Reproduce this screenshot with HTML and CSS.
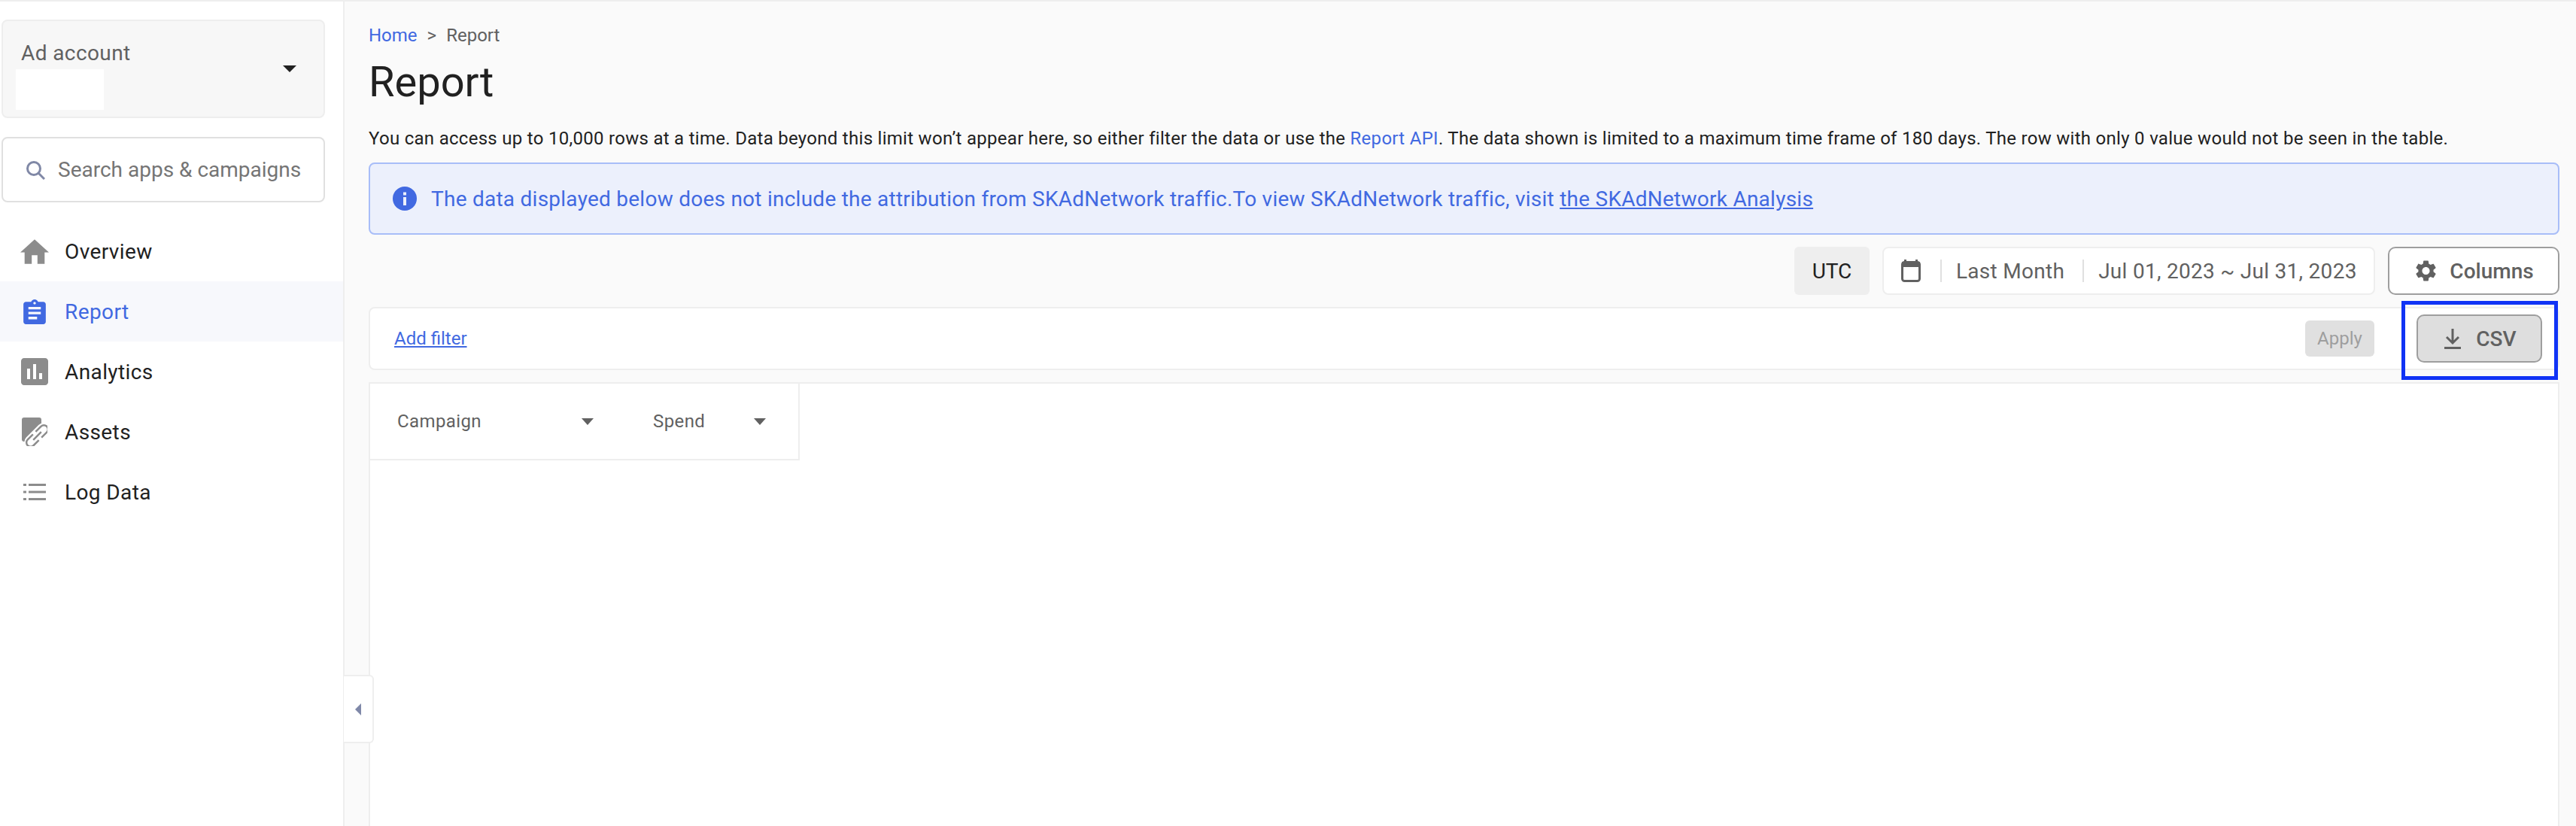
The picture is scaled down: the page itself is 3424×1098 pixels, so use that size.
FILE: index.html
```html
<!DOCTYPE html>
<html lang="en">
  <head>
    <meta charset="UTF-8" />
    <title>Report</title>
    <link rel="stylesheet" href="styles.css">
  </head>
  <body>
    <div class="app">
      <aside class="sidebar">
        <div class="account">
          <div class="account-info">
            <div class="account-label">Ad account</div>
            <div class="account-name"></div>
          </div>
          <span class="caret caret-dark"></span>
        </div>
        <div class="search">
          <svg width="26" height="26" viewBox="0 0 26 26" fill="none" stroke="#8088a6" stroke-width="3">
            <circle cx="11" cy="11" r="8.5" />
            <path d="M17 17l8 8" />
          </svg>
          <span>Search apps &amp; campaigns</span>
        </div>
        <nav class="nav">
          <a class="nav-item">
            <span class="nav-icon">
              <svg width="38" height="33" viewBox="2 3 20 17" fill="#8c8c8c"><path d="M10 20v-6h4v6h5v-8h3L12 3 2 12h3v8z" /></svg>
            </span>
            Overview
          </a>
          <a class="nav-item active">
            <span class="nav-icon">
              <svg width="30" height="33" viewBox="3 1 18 20" fill="#4169e1"><path d="M19 3h-4.18C14.4 1.84 13.3 1 12 1c-1.3 0-2.4.84-2.82 2H5c-1.1 0-2 .9-2 2v14c0 1.1.9 2 2 2h14c1.1 0 2-.9 2-2V5c0-1.1-.9-2-2-2zm-7 0c.55 0 1 .45 1 1s-.45 1-1 1-1-.45-1-1 .45-1 1-1zm2 14H7v-2h7v2zm3-4H7v-2h10v2zm0-4H7V7h10v2z" /></svg>
            </span>
            Report
          </a>
          <a class="nav-item">
            <span class="nav-icon">
              <svg width="36" height="36" viewBox="3 3 18 18" fill="#8c8c8c"><path d="M19 3H5c-1.1 0-2 .9-2 2v14c0 1.1.9 2 2 2h14c1.1 0 2-.9 2-2V5c0-1.1-.9-2-2-2zM9 17H7v-7h2v7zm4 0h-2V7h2v10zm4 0h-2v-4h2v4z" /></svg>
            </span>
            Analytics
          </a>
          <a class="nav-item">
            <span class="nav-icon">
              <svg width="34" height="38" viewBox="0 0 34 38" fill="none">
                <path d="M3 0h20a3 3 0 0 1 3 3v29H3a3 3 0 0 1-3-3V3a3 3 0 0 1 3-3z" fill="#8c8c8c" />
                <g transform="rotate(-45 20.500 24.500)">
                  <rect x="0" y="15.500" width="41" height="18" rx="9" fill="#fff" />
                  <path d="M18 19H8a5.500 5.500 0 0 0 0 11h10M23 19h10a5.500 5.500 0 0 1 0 11H23M13 24.500h15" stroke="#8c8c8c" stroke-width="2.500" />
                </g>
              </svg>
            </span>
            Assets
          </a>
          <a class="nav-item">
            <span class="nav-icon">
              <svg width="30" height="22" viewBox="0 0 30 22" fill="#8c8c8c">
                <rect x="0" y="0" width="4" height="3" />
                <rect x="7" y="0" width="23" height="3" />
                <rect x="0" y="9.5" width="4" height="3" />
                <rect x="7" y="9.5" width="23" height="3" />
                <rect x="0" y="19" width="4" height="3" />
                <rect x="7" y="19" width="23" height="3" />
              </svg>
            </span>
            Log Data
          </a>
        </nav>
      </aside>

      <main class="main">
        <div class="breadcrumb">
          <a class="link">Home</a>
          <span class="crumb-sep">&gt;</span>
          <span>Report</span>
        </div>
        <h1>Report</h1>
        <p class="notice">
          You can access up to 10,000 rows at a time. Data beyond this limit won’t appear here, so either filter the data or use the <a class="link">Report API</a>. The data shown is limited to a maximum time frame of 180 days. The row with only 0 value would not be seen in the table.
        </p>
        <div class="banner">
          <svg width="32" height="32" viewBox="0 0 32 32">
            <circle cx="16" cy="16" r="16" fill="#4169e1" />
            <rect x="14" y="14" width="4" height="11" fill="#ecf0fc" />
            <rect x="14" y="7.5" width="4" height="4" fill="#ecf0fc" />
          </svg>
          <span>The data displayed below does not include the attribution from SKAdNetwork traffic.To view SKAdNetwork traffic, visit <u>the SKAdNetwork Analysis</u></span>
        </div>

        <div class="toolbar">
          <div class="utc">UTC</div>
          <div class="date-range">
            <svg width="26" height="30" viewBox="0 0 26 30">
              <path d="M4 0h3v4H4zM19 0h3v4h-3z" fill="#616161" />
              <rect x="1.500" y="3.500" width="23" height="25" rx="3" fill="none" stroke="#616161" stroke-width="3" />
              <rect x="1" y="3" width="24" height="7" fill="#616161" />
            </svg>
            <span class="date-sep date-sep-first"></span>
            <span>Last Month</span>
            <span class="date-sep"></span>
            <span>Jul 01, 2023 ~ Jul 31, 2023</span>
          </div>
          <button class="btn btn-columns">
            <svg width="27" height="28" viewBox="2.500 2 19 20" fill="#616161"><path d="M19.140 12.940c.04-.3.06-.61.06-.94 0-.32-.02-.64-.07-.94l2.030-1.580c.18-.14.23-.41.12-.61l-1.920-3.320c-.12-.22-.37-.29-.59-.22l-2.390.96c-.5-.38-1.030-.7-1.620-.94l-.36-2.540c-.04-.24-.24-.41-.48-.41h-3.840c-.24 0-.43.17-.47.41l-.36 2.540c-.59.24-1.130.57-1.620.94l-2.390-.96c-.22-.08-.47 0-.59.22L2.740 8.870c-.12.21-.08.47.12.61l2.030 1.580c-.05.3-.09.63-.09.94s.02.64.07.94l-2.030 1.580c-.18.14-.23.41-.12.61l1.920 3.320c.12.22.37.29.59.22l2.390-.96c.5.38 1.030.7 1.620.94l.36 2.540c.05.24.24.41.48.41h3.840c.24 0 .44-.17.47-.41l.36-2.540c.59-.24 1.130-.56 1.620-.94l2.390.96c.22.08.47 0 .59-.22l1.920-3.320c.12-.22.07-.47-.12-.61l-2.010-1.580zM12 15.600c-1.980 0-3.600-1.620-3.600-3.600s1.620-3.600 3.600-3.600 3.600 1.620 3.600 3.600-1.620 3.600-3.600 3.600z" /></svg>
            Columns
          </button>
        </div>

        <div class="filter-bar">
          <a class="link add-filter">Add filter</a>
          <button class="btn-apply">Apply</button>
          <div class="csv-wrap">
            <button class="btn btn-csv">
              <svg width="22" height="27" viewBox="0 0 22 27" fill="none" stroke="#616161" stroke-width="3">
                <path d="M11 0v19M3 11l8 8 8-8" />
                <path d="M0 25.500h22" />
              </svg>
              CSV
            </button>
            <div class="highlight"></div>
          </div>
        </div>

        <div class="table">
          <div class="table-head">
            <div class="col col-campaign">Campaign <span class="caret"></span></div>
            <div class="col col-spend">Spend <span class="caret"></span></div>
          </div>
        </div>

        <div class="collapse-tab"><span class="tab-arrow"></span></div>
      </main>
    </div>
  </body>
</html>
```

FILE: styles.css
```css
* {
  box-sizing: border-box;
}

html,
body {
  margin: 0;
  height: 100%;
  overflow: hidden;
}

body {
  font-family: "Roboto", "Liberation Sans", sans-serif;
  color: #212121;
  background-color: #fff;
}

.app {
  display: flex;
  height: 100vh;
  border-top: 2px solid #eee;
}

.link {
  color: #4169e1;
}

/* sidebar */
.sidebar {
  width: 458px;
  flex-shrink: 0;
  padding-top: 24px;
  background-color: #fff;
  border-right: 2px solid #eee;
}

.account {
  display: flex;
  align-items: center;
  justify-content: space-between;
  width: 430px;
  height: 131px;
  margin-left: 2px;
  padding: 0 36px 0 17px;
  background-color: #f7f7f7;
  border: 2px solid #eee;
  border-radius: 8px;
}

.account-info {
  margin-top: 16px;
}

.account-label {
  padding-left: 7px;
  font-size: 28px;
  line-height: 36px;
  letter-spacing: 0.4px;
  color: #616161;
}

.account-name {
  width: 117px;
  height: 54px;
  margin-top: 3px;
  background-color: #fff;
}

.caret {
  display: inline-block;
  width: 0;
  height: 0;
  border-left: 8px solid transparent;
  border-right: 8px solid transparent;
  border-top: 9px solid #616161;
}

.caret-dark {
  border-left-width: 9px;
  border-right-width: 9px;
  border-top-color: #212121;
}

.search {
  display: flex;
  align-items: center;
  gap: 17px;
  width: 430px;
  height: 87px;
  margin: 25px 0 25px 2px;
  padding-left: 30px;
  font-size: 28px;
  color: #757575;
  background-color: #fff;
  border: 2px solid #e0e0e0;
  border-radius: 8px;
}

.nav-item {
  display: flex;
  align-items: center;
  gap: 20px;
  height: 80px;
  padding-left: 26px;
  font-size: 28px;
  letter-spacing: 0.4px;
  color: #212121;
}

.nav-item.active {
  color: #4169e1;
  background-color: #f7f8fc;
}

.nav-icon {
  display: flex;
  align-items: center;
  justify-content: center;
  width: 40px;
}

/* main */
.main {
  position: relative;
  flex: 1;
  min-width: 0;
  padding: 28px 22px 0 32px;
  background-color: #fafafa;
}

.breadcrumb {
  display: flex;
  gap: 13px;
  font-size: 24px;
  line-height: 34px;
  color: #616161;
}

h1 {
  margin: 7px 0 0;
  font-size: 56px;
  line-height: 76px;
  font-weight: 400;
}

.notice {
  margin: 20px 0 0;
  font-size: 24px;
  line-height: 34px;
  letter-spacing: 0.285px;
  white-space: nowrap;
}

.banner {
  display: flex;
  align-items: center;
  gap: 19px;
  height: 96px;
  margin-top: 15px;
  padding-left: 30px;
  font-size: 28px;
  letter-spacing: 0.25px;
  color: #4169e1;
  background-color: #ecf0fc;
  border: 2px solid #a8bdf8;
  border-radius: 8px;
}

.toolbar {
  display: flex;
  justify-content: flex-end;
  gap: 17px;
  margin-top: 16px;
}

.utc {
  display: flex;
  align-items: center;
  justify-content: center;
  width: 100px;
  height: 64px;
  font-size: 28px;
  background-color: #eee;
  border-radius: 6px;
}

.date-range {
  display: flex;
  align-items: center;
  width: 655px;
  height: 64px;
  padding-left: 23px;
  font-size: 28px;
  letter-spacing: 0.28px;
  color: #616161;
  background-color: #fff;
  border: 2px solid #eee;
  border-radius: 8px;
}

.date-sep {
  width: 2px;
  height: 30px;
  margin: 0 19px 0 24px;
  background-color: #e0e0e0;
}

.date-sep-first {
  margin: 0 19px 0 26px;
}

.btn {
  display: flex;
  align-items: center;
  justify-content: center;
  height: 64px;
  font-family: inherit;
  font-size: 28px;
  font-weight: 500;
  color: #616161;
  border: 2px solid #9e9e9e;
  border-radius: 10px;
}

.btn-columns {
  gap: 18px;
  width: 228px;
  padding-left: 9px;
  background-color: #fff;
}

.filter-bar {
  display: flex;
  align-items: center;
  height: 84px;
  margin-top: 16px;
  padding: 0 21px 0 32px;
  background-color: #fff;
  border: 2px solid #eee;
  border-radius: 8px;
}

.add-filter {
  flex: 1;
  font-size: 24px;
  text-decoration: underline;
}

.btn-apply {
  width: 92px;
  height: 48px;
  margin-right: 56px;
  font-family: inherit;
  font-size: 24px;
  color: #9e9e9e;
  background-color: #e0e0e0;
  border: none;
  border-radius: 6px;
}

.csv-wrap {
  position: relative;
}

.btn-csv {
  gap: 20px;
  width: 167px;
  padding-left: 9px;
  background-color: #dedede;
}

/* annotation drawn over the page */
.highlight {
  position: absolute;
  top: -18px;
  right: -21px;
  bottom: -23px;
  left: -20px;
  border: 5px solid #1033f5;
}

.table {
  height: 600px;
  margin-top: 16px;
  background-color: #fff;
  border: 2px solid #eee;
}

.table-head {
  display: flex;
  width: 571px;
  height: 102px;
  border-right: 2px solid #eee;
  border-bottom: 2px solid #eee;
}

.col {
  display: flex;
  align-items: center;
  justify-content: space-between;
  font-size: 24px;
  letter-spacing: 0.4px;
  color: #616161;
}

.col-campaign {
  width: 297px;
  padding-left: 36px;
}

.col-spend {
  width: 150px;
  margin-left: 79px;
}

.collapse-tab {
  position: absolute;
  top: 895px;
  left: -1px;
  display: flex;
  align-items: center;
  justify-content: center;
  width: 40px;
  height: 91px;
  background-color: #fff;
  border: 2px solid #eee;
  border-left: none;
  border-radius: 0 6px 6px 0;
}

.tab-arrow {
  width: 0;
  height: 0;
  border-top: 8px solid transparent;
  border-bottom: 8px solid transparent;
  border-right: 8px solid #7f88a8;
}
```
